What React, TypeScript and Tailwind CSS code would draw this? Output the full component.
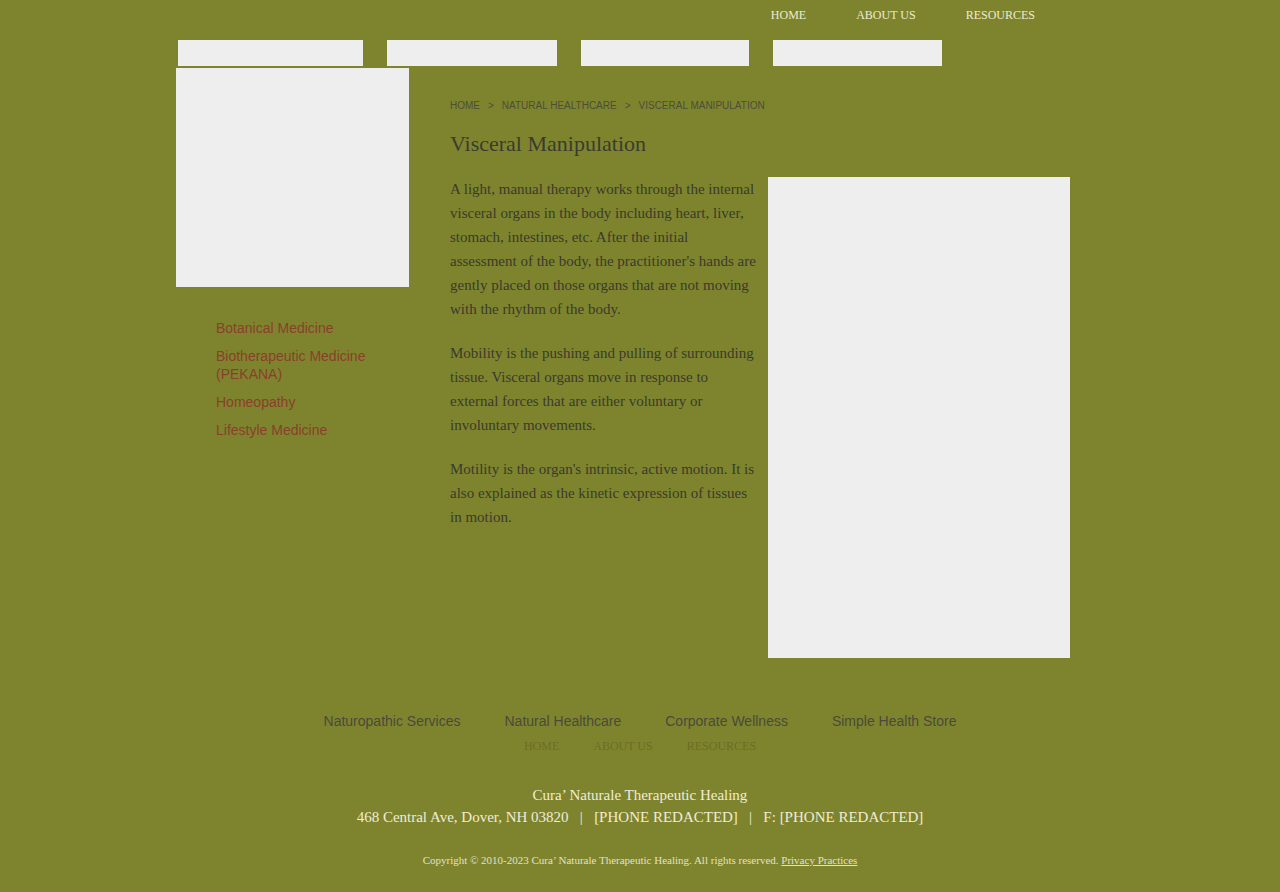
export default function App() {
  const topNav = ['HOME', 'ABOUT US', 'RESOURCES']
  const bars = ['w-[185px]', 'w-[170px]', 'w-[168px]', 'w-[169px]']
  const sideLinks = [
    'Botanical Medicine',
    'Biotherapeutic Medicine (PEKANA)',
    'Homeopathy',
    'Lifestyle Medicine',
  ]
  const footerNav = ['Naturopathic Services', 'Natural Healthcare', 'Corporate Wellness', 'Simple Health Store']

  return (
    <div className="min-h-[892px] bg-[#7e842e] font-['Liberation_Serif',serif]">
      <div className="w-[960px] mx-auto">
        {/* top links */}
        <nav className="flex justify-end gap-[50px] pr-[85px] pt-[7px] h-[40px] text-[12px] text-[#ecebd0]">
          {topNav.map((item) => (
            <a key={item} className="leading-[16px]">{item}</a>
          ))}
        </nav>

        {/* main menu placeholders */}
        <div className="flex gap-[24px] pl-[18px] h-[26px]">
          {bars.map((w, i) => (
            <div key={i} className={`${w} h-[26px] bg-[#eeeeee]`} />
          ))}
        </div>

        <div className="flex pl-[16px] pt-[2px]">
          {/* sidebar */}
          <aside className="w-[233px] shrink-0">
            <div className="h-[219px] bg-[#eeeeee]" />
            <ul className="mt-[32px] pl-[40px] pr-[10px] flex flex-col gap-[10px] font-['Liberation_Sans',sans-serif] text-[14px] leading-[18px] text-[#8a3f2a]">
              {sideLinks.map((l) => (
                <li key={l}>{l}</li>
              ))}
            </ul>
          </aside>

          {/* content */}
          <main className="ml-[41px] w-[620px] pt-[32px]">
            <div className="flex items-center gap-[8px] font-['Liberation_Sans',sans-serif] text-[10px] leading-[12px] text-[#4d4d3a]">
              <span>HOME</span>
              <span>&gt;</span>
              <span>NATURAL HEALTHCARE</span>
              <span>&gt;</span>
              <span>VISCERAL MANIPULATION</span>
            </div>
            <h1 className="mt-[18px] text-[22px] leading-[28px] text-[#3b3b30]">Visceral Manipulation</h1>
            <div className="flex mt-[19px]">
              <div className="w-[306px] text-[15px] leading-[24px] text-[#3a3a2c] flex flex-col gap-[20px]">
                <p>
                  A light, manual therapy works through the internal visceral organs in the body including heart, liver,
                  stomach, intestines, etc. After the initial assessment of the body, the practitioner's hands are gently
                  placed on those organs that are not moving with the rhythm of the body.
                </p>
                <p>
                  Mobility is the pushing and pulling of surrounding tissue. Visceral organs move in response to external
                  forces that are either voluntary or involuntary movements.
                </p>
                <p>
                  Motility is the organ's intrinsic, active motion. It is also explained as the kinetic expression of
                  tissues in motion.
                </p>
              </div>
              <div className="ml-auto w-[302px] h-[481px] bg-[#eeeeee]" />
            </div>
          </main>
        </div>
      </div>

      {/* footer */}
      <footer className="pt-[54px] pb-[24px] flex flex-col items-center">
        <div className="flex gap-[44px] font-['Liberation_Sans',sans-serif] text-[14px] leading-[18px] text-[#4a4a3a]">
          {footerNav.map((f) => (
            <a key={f}>{f}</a>
          ))}
        </div>
        <div className="mt-[9px] flex gap-[34px] text-[12px] leading-[14px] text-[#6a6e25]">
          {topNav.map((item) => (
            <a key={item}>{item}</a>
          ))}
        </div>
        <div className="mt-[31px] text-[15px] leading-[22px] text-[#f0ecd6] text-center">
          <p>Cura’ Naturale Therapeutic Healing</p>
          <p className="whitespace-pre">468 Central Ave, Dover, NH 03820   |   [PHONE REDACTED]   |   F: [PHONE REDACTED]</p>
        </div>
        <p className="mt-[25px] text-[11px] leading-[14px] text-[#e4e0c4]">
          Copyright © 2010-2023 Cura’ Naturale Therapeutic Healing. All rights reserved.{' '}
          <a className="underline">Privacy Practices</a>
        </p>
      </footer>
    </div>
  )
}
